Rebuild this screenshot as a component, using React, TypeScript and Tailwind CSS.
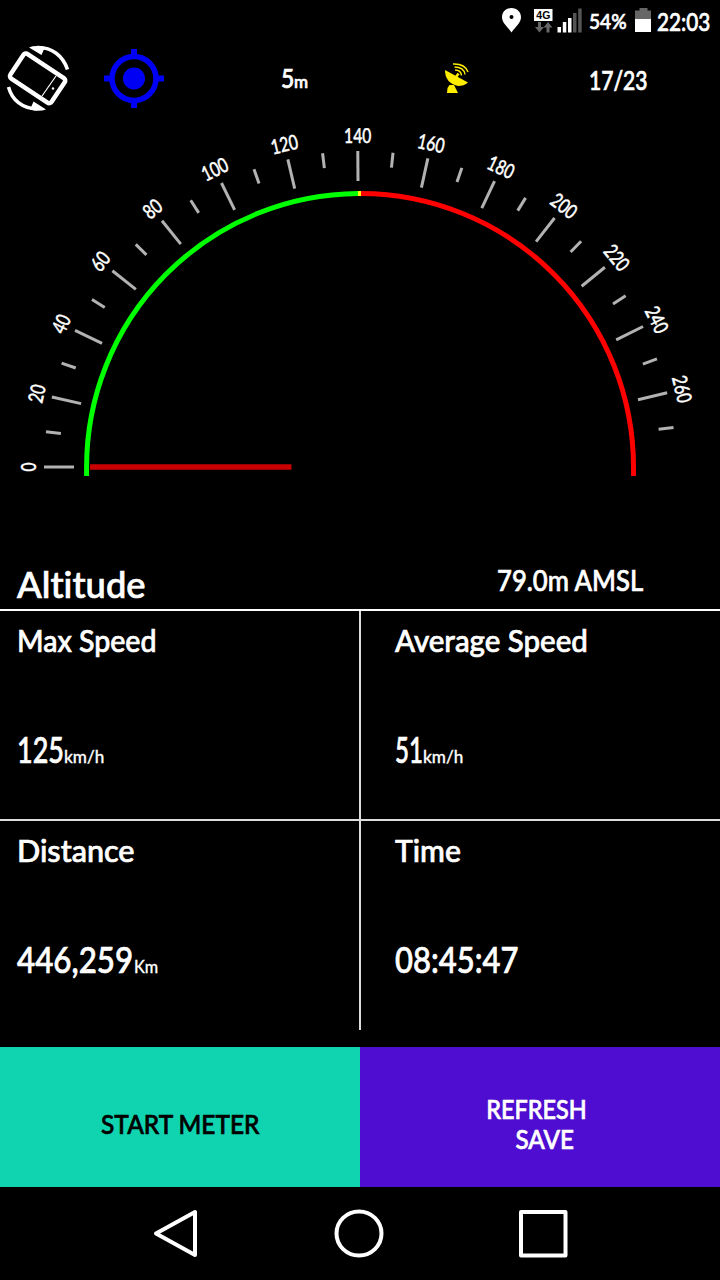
import type { ReactNode } from "react";

const CX = 360;
const CY = 467;
const STEP = 6.4;

// distance from the centre of the dial, angle measured from the left end
function polar(radius: number, deg: number) {
    const a = (deg * Math.PI) / 180;
    return { x: CX - radius * Math.cos(a), y: CY - radius * Math.sin(a) };
}

const ticks = Array.from({ length: 28 }, (_, i) => ({
    value: i * 10,
    deg: i * STEP,
    major: i % 2 === 0,
}));

function StatusBar() {
    return (
        <div className="flex h-10 pl-[501px]">
            <svg width="21" height="40" viewBox="0 0 21 40">
                <path d="M10.5 8C5 8 1 12 1 17.2C1 23 7 27 10.5 32.5C14 27 20 23 20 17.2C20 12 16 8 10.5 8Z" fill="#fff" />
                <circle cx="10.5" cy="17" r="2" fill="#000" />
            </svg>
            <svg className="ml-3" width="19" height="40" viewBox="0 0 19 40">
                <rect x="0" y="9" width="18.5" height="12" fill="#fff" />
                <text x="9.3" y="19" textAnchor="middle" textLength="14" lengthAdjust="spacingAndGlyphs" fontSize="11" fontWeight="700" fontFamily="Liberation Sans, sans-serif" fill="#000" className="[-webkit-text-stroke:0]">4G</text>
                <path d="M4 22h3v5h3l-4.500 5.500L1 27h3zM12.500 32.500v-5h-3l4.500-5.500l4.500 5.500h-3v5z" fill="#666" />
            </svg>
            <svg className="ml-1" width="26" height="40" viewBox="0 0 26 40">
                <path d="M0.500 27h3.500v5.500h-3.500zM5.800 22h3.500v10.500h-3.500zM11 18h3.500v14.500h-3.500z" fill="#fff" />
                <path d="M16 13h3.500v19.500h-3.500zM21.200 8.500h3.500v24h-3.500z" fill="#555" />
            </svg>
            <div className="ml-[6px] w-[40px] whitespace-nowrap">
                <span className="inline-block origin-left scale-x-[0.87] text-[22px] leading-[41px]">54%</span>
            </div>
            <svg className="ml-[6px]" width="17" height="40" viewBox="0 0 17 40">
                <path d="M4.500 8h8v2.500h3.500v8.500H0V10.500h4.500z" fill="#666" />
                <rect x="0" y="19" width="16" height="13" fill="#fff" />
            </svg>
            <div className="ml-[5px] w-[54px] whitespace-nowrap">
                <span className="inline-block origin-left scale-x-[0.83] text-[25px] leading-[42px]">22:03</span>
            </div>
        </div>
    );
}

function GpsRow() {
    return (
        <div className="flex h-[78px]">
            <svg width="76" height="78" viewBox="0 40 76 78" fill="none" stroke="#fff">
                <rect x="-24.500" y="-14.500" width="49.500" height="29.500" rx="3" strokeWidth="4.500" transform="translate(37.500 78) rotate(33.700)" />
                <path d="M56 76L42 96" strokeWidth="1.200" />
                <circle cx="53" cy="88.500" r="1.200" fill="#fff" stroke="none" />
                <path d="M37 47.500C52 47 63 56 67.500 69.500" strokeWidth="3.500" />
                <path d="M29 47.500Q35 45 45 47L41.500 55Z" fill="#fff" stroke="none" />
                <path d="M8.500 87C12 100 22 108.500 37 109" strokeWidth="3.500" />
                <path d="M33.500 101.500L46 109.500Q39 112 30 109.500Z" fill="#fff" stroke="none" />
            </svg>
            <svg className="ml-7" width="60" height="78" viewBox="104 40 60 78" stroke="#0000f5" fill="none">
                <circle cx="134" cy="78.500" r="22" strokeWidth="5.500" />
                <circle cx="134" cy="78.500" r="11" fill="#0000f5" stroke="none" />
                <path d="M134 49v8M134 100v8M104 78.500h8M156 78.500h8" strokeWidth="6" />
            </svg>
            <div className="ml-[117px] flex w-[35px] items-baseline whitespace-nowrap pt-[18px] leading-10">
                <span className="inline-block w-[13px] origin-left scale-x-[0.85] text-[27px]">5</span>
                <span className="text-[17px]">m</span>
            </div>
            <svg className="ml-[128px]" width="28" height="78" viewBox="444 40 28 78" fill="none" stroke="#fe0">
                <path d="M445 70L468 82.500Q464 86 458 86Q445 83 445 70Z" fill="#fe0" stroke="none" />
                <path d="M449.500 85H454L458 93H447L447.500 88Z" fill="#fe0" stroke="none" />
                <path d="M456 77L458.500 73.500" strokeWidth="2.500" />
                <path d="M455 70Q461 70 461.500 75.500M454.500 67Q464 67 465 74.500M453 64Q465 63.500 468 72" strokeWidth="1.400" />
            </svg>
            <div className="ml-[117px] whitespace-nowrap pt-5">
                <span className="inline-block origin-left scale-x-[0.78] text-[27px] leading-10">17/23</span>
            </div>
        </div>
    );
}

function Gauge() {
    return (
        <svg width="720" height="432" viewBox="0 118 720 432" fill="none">
            {ticks.map((t) => {
                const a = polar(t.major ? 286 : 301, t.deg);
                const b = polar(316, t.deg);
                return <line key={t.value} x1={a.x} y1={a.y} x2={b.x} y2={b.y} stroke="#b2b2b2" strokeWidth="3" />;
            })}
            {ticks.filter((t) => t.major).map((t) => {
                const p = polar(324, t.deg);
                const text = String(t.value);
                return (
                    <text
                        key={t.value}
                        transform={`translate(${p.x} ${p.y}) rotate(${t.deg - 90})`}
                        textAnchor="middle"
                        textLength={text.length * 9.1}
                        lengthAdjust="spacingAndGlyphs"
                        fontSize="20.500"
                        fill="#fff"
                        stroke="#fff"
                        strokeWidth="0.400"
                    >
                        {text}
                    </text>
                );
            })}
            <path d="M86.600 476V467A273.500 273.500 0 0 1 358 193.500" stroke="#0f0" strokeWidth="5" />
            <path d="M361 193.500A273.500 273.500 0 0 1 633.500 467V476" stroke="#f00" strokeWidth="5" />
            <path d="M358 193.500h3" stroke="#ff0" strokeWidth="5" />
            <path d="M90 467H291.500" stroke="#c80000" strokeWidth="5.400" />
        </svg>
    );
}

function Cell({ title, className, children }: { title: ReactNode; className: string; children: ReactNode }) {
    return (
        <div className={className}>
            <div className="whitespace-nowrap text-[31px] leading-10">{title}</div>
            <div className="mt-[65px] flex items-baseline whitespace-nowrap text-[36px] leading-[48px]">{children}</div>
        </div>
    );
}

export default function App() {
    return (
        <div className="h-[1280px] w-[720px] overflow-hidden bg-black font-['Lato','Noto_Sans',sans-serif] font-medium text-white [-webkit-text-stroke:0.7px] [font-variant-ligatures:none]">
            <StatusBar />
            <GpsRow />
            <Gauge />

            <div className="flex h-[61px] justify-between border-b-2 border-white pl-[17px] pr-[76px]">
                <span className="origin-left scale-x-[1.01] pt-[10px] text-[36px] leading-[48px]">Altitude</span>
                <span className="w-[147px] whitespace-nowrap pt-[10px]">
                    <span className="inline-block origin-left scale-x-[0.885] text-[29px] leading-[39px]">79.0m AMSL</span>
                </span>
            </div>

            <div className="grid h-[419px] grid-cols-[359px_361px] grid-rows-[210px_209px]">
                <Cell
                    className="border-b-2 border-[#ddd] pl-[17px] pt-[9px]"
                    title={<span className="inline-block origin-left scale-x-[0.92]">Max Speed</span>}
                >
                    <span className="w-[47px] origin-left scale-x-[0.75]">125</span>
                    <span className="origin-left scale-x-[0.95] text-[18px] [-webkit-text-stroke:0.3px]">km/h</span>
                </Cell>
                <Cell
                    className="border-b-2 border-l-2 border-[#ddd] pl-[34px] pt-[9px]"
                    title={<span className="inline-block origin-left scale-x-[0.95]">Average Speed</span>}
                >
                    <span className="w-[28px] origin-left scale-x-[0.67]">51</span>
                    <span className="origin-left scale-x-[0.95] text-[18px] [-webkit-text-stroke:0.3px]">km/h</span>
                </Cell>
                <Cell
                    className="pl-[17px] pt-[9px]"
                    title={<span className="inline-block origin-left scale-x-[0.985]">Distance</span>}
                >
                    <span className="w-[117px] origin-left scale-x-[0.87]">446,259</span>
                    <span className="origin-left scale-x-[0.9] text-[18px] [-webkit-text-stroke:0.3px]">Km</span>
                </Cell>
                <Cell
                    className="border-l-2 border-[#ddd] pl-[34px] pt-[9px]"
                    title={<span className="inline-block origin-left scale-x-[0.97]">Time</span>}
                >
                    <span className="origin-left scale-x-[0.86]">08:45:47</span>
                </Cell>
            </div>

            <div className="mt-[17px] grid h-[140px] grid-cols-2 text-[26px] leading-[30px]">
                <button className="bg-[#10d4b0] pt-[14px] text-black">
                    <span className="inline-block scale-x-[0.94]">START METER</span>
                </button>
                <button className="bg-[#4e0dd0] pt-[14px] text-white">
                    <span className="block scale-x-[0.9] pr-2">REFRESH</span>
                    <span className="block scale-x-[0.93] pl-[10px]">SAVE</span>
                </button>
            </div>

            <svg width="720" height="93" viewBox="0 1187 720 93" fill="none" stroke="#fff" strokeWidth="4" strokeLinejoin="round">
                <path d="M195 1212V1255L156 1233.500Z" />
                <ellipse cx="359" cy="1233.500" rx="22.500" ry="22" />
                <rect x="521" y="1212" width="44.500" height="43.500" />
            </svg>
        </div>
    );
}
